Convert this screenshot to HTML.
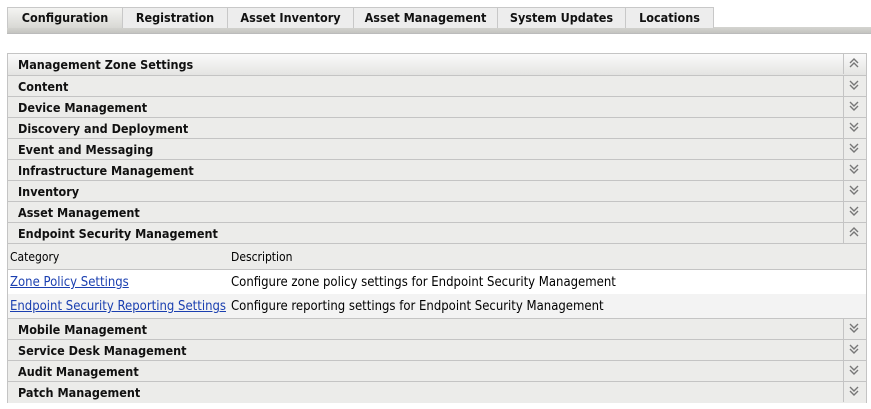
<!DOCTYPE html>
<html><head><style>
body{margin:0;width:871px;height:409px;background:#fff;font-family:"DejaVu Sans Condensed","DejaVu Sans","Liberation Sans",sans-serif;font-size:13px;color:#000;position:relative;overflow:hidden}
.tab{position:absolute;top:7px;border:1px solid #c8c8c8;border-bottom:none;background:#ededed;font-weight:bold;font-size:12.5px;text-align:center;line-height:20px;box-sizing:border-box;height:21px;color:#111}
.tab.sel{background:linear-gradient(#f4f4f2,#d8d8d4)}
.strip{position:absolute;left:7px;right:0;top:27px;height:6px;background:linear-gradient(#d4d4d0,#c4c4c0);border-bottom:1px solid #bbb}
.panel{position:absolute;left:7px;top:53px;width:860px;height:350px;border:1px solid #c4c4c4;box-sizing:border-box;background:#ededed}
.row{position:absolute;left:0;width:858px;height:21px;border-bottom:1px solid #c4c4c4;box-sizing:border-box;background:#ececea;font-weight:bold;font-size:12.5px;line-height:22px;padding-left:10px;color:#111}
.row .ic{position:absolute;right:0;top:0;width:22px;height:20px;border-left:1px solid #c4c4c4;line-height:0}
.hdr{background:linear-gradient(#fafafa,#e4e4e2);height:22px;line-height:22px}
.cell{position:absolute;font-size:13px}
a{color:#1a3fb0;text-decoration:underline}
</style></head><body>
<div class="strip"></div>
<div class="tab sel" style="left:7px;width:116px">Configuration</div>
<div class="tab" style="left:122px;width:106px">Registration</div>
<div class="tab" style="left:227px;width:127px">Asset Inventory</div>
<div class="tab" style="left:353px;width:145px">Asset Management</div>
<div class="tab" style="left:497px;width:129px">System Updates</div>
<div class="tab" style="left:625px;width:89px">Locations</div>

<svg width="0" height="0" style="position:absolute"><defs>
<g id="dn"><path d="M6 5l4 4 4-4M6 9l4 4 4-4" fill="none" stroke="#777" stroke-width="1.4"/></g>
<g id="up"><path d="M6 9l4-4 4 4M6 13l4-4 4 4" fill="none" stroke="#777" stroke-width="1.4"/></g>
</defs></svg>

<div class="panel">
<div class="row hdr" style="top:0">Management Zone Settings<span class="ic"><svg width="21" height="20"><use href="#up"/></svg></span></div>
<div class="row" style="top:22px">Content<span class="ic"><svg width="21" height="20"><use href="#dn"/></svg></span></div>
<div class="row" style="top:43px">Device Management<span class="ic"><svg width="21" height="20"><use href="#dn"/></svg></span></div>
<div class="row" style="top:64px">Discovery and Deployment<span class="ic"><svg width="21" height="20"><use href="#dn"/></svg></span></div>
<div class="row" style="top:85px">Event and Messaging<span class="ic"><svg width="21" height="20"><use href="#dn"/></svg></span></div>
<div class="row" style="top:106px">Infrastructure Management<span class="ic"><svg width="21" height="20"><use href="#dn"/></svg></span></div>
<div class="row" style="top:127px">Inventory<span class="ic"><svg width="21" height="20"><use href="#dn"/></svg></span></div>
<div class="row" style="top:148px">Asset Management<span class="ic"><svg width="21" height="20"><use href="#dn"/></svg></span></div>
<div class="row" style="top:169px">Endpoint Security Management<span class="ic"><svg width="21" height="20"><use href="#up"/></svg></span></div>
<div style="position:absolute;left:0;top:190px;width:858px;height:26px;background:#ececea;border-bottom:1px solid #c4c4c4;box-sizing:border-box"></div>
<div class="cell" style="left:2px;top:196px;font-size:12px">Category</div>
<div class="cell" style="left:223px;top:196px;font-size:12px">Description</div>
<div style="position:absolute;left:0;top:216px;width:858px;height:24px;background:#fff"></div>
<div class="cell" style="left:2px;top:221px"><a>Zone Policy Settings</a></div>
<div class="cell" style="left:223px;top:221px">Configure zone policy settings for Endpoint Security Management</div>
<div style="position:absolute;left:0;top:240px;width:858px;height:24px;background:#f3f3f3"></div>
<div class="cell" style="left:2px;top:245px"><a>Endpoint Security Reporting Settings</a></div>
<div class="cell" style="left:223px;top:245px">Configure reporting settings for Endpoint Security Management</div>
<div class="row" style="top:264px;border-top:1px solid #c4c4c4;height:22px">Mobile Management<span class="ic"><svg width="21" height="20"><use href="#dn"/></svg></span></div>
<div class="row" style="top:286px">Service Desk Management<span class="ic"><svg width="21" height="20"><use href="#dn"/></svg></span></div>
<div class="row" style="top:307px">Audit Management<span class="ic"><svg width="21" height="20"><use href="#dn"/></svg></span></div>
<div class="row" style="top:328px;border-bottom:none">Patch Management<span class="ic"><svg width="21" height="20"><use href="#dn"/></svg></span></div>
</div>
</body></html>
